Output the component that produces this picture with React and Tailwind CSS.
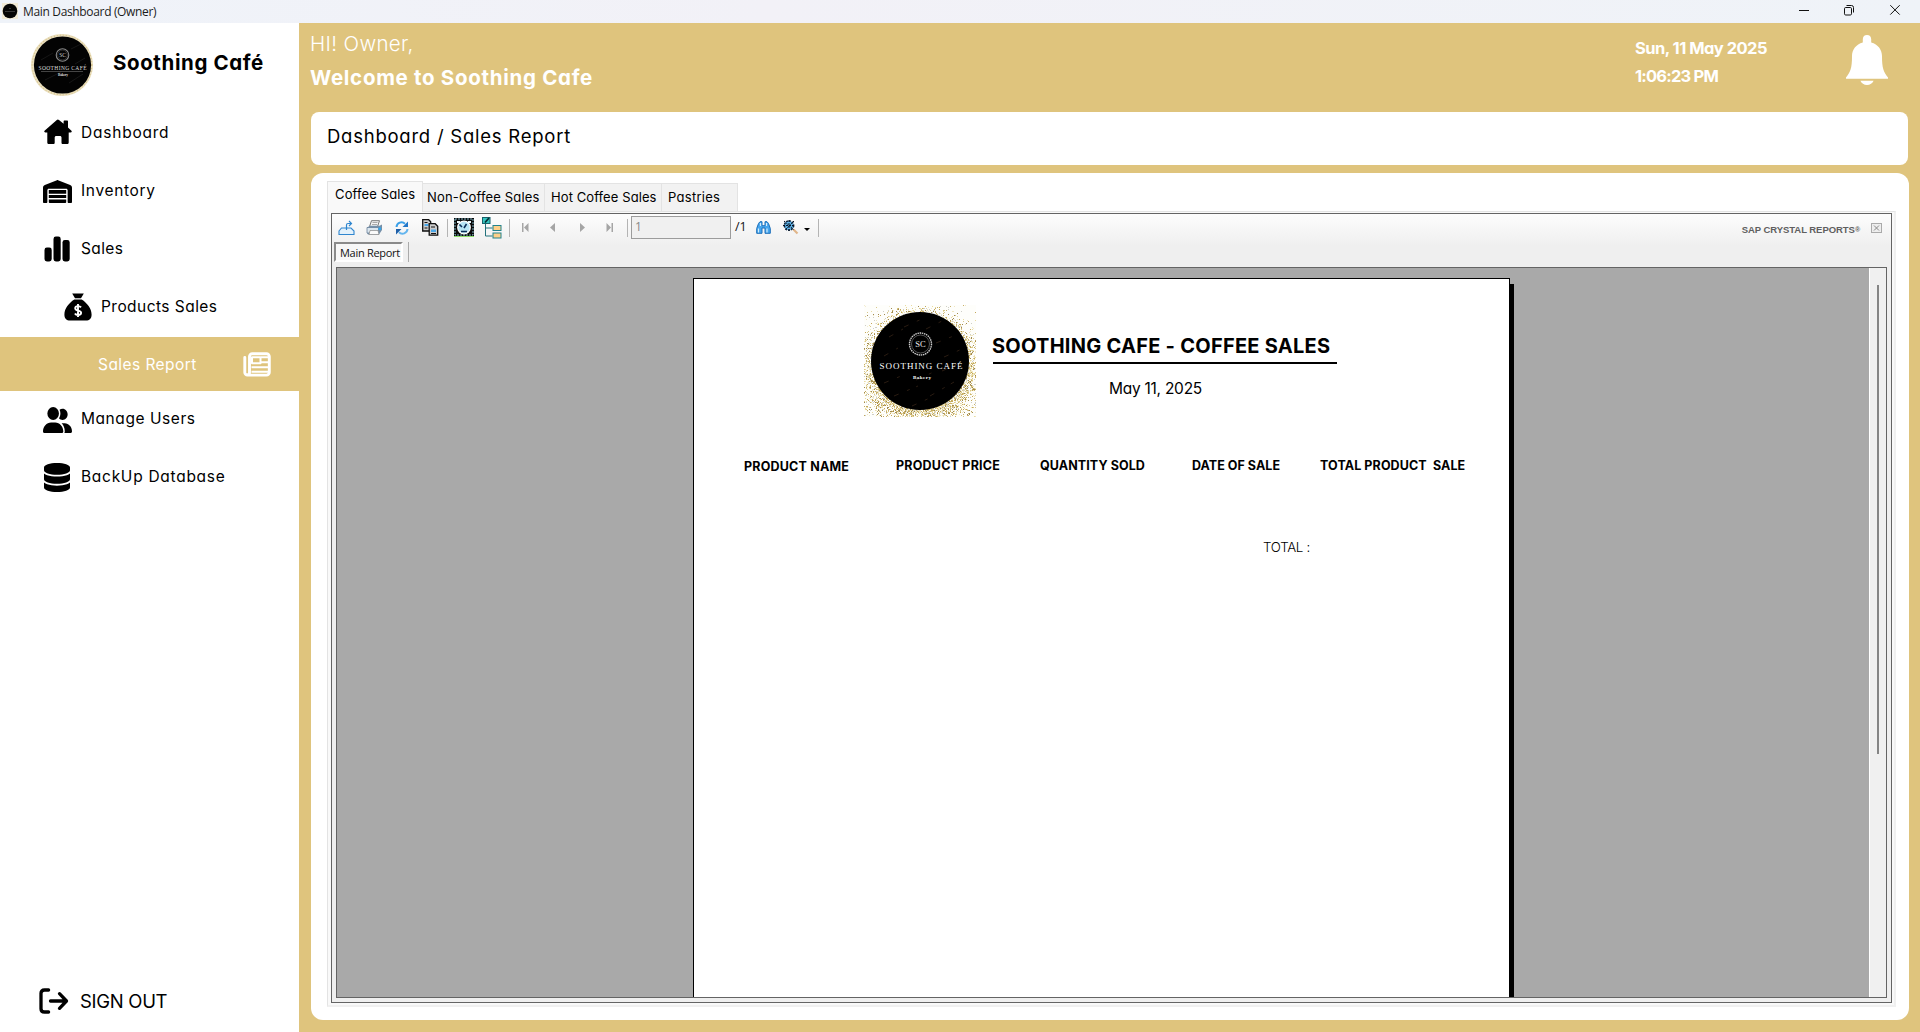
import { FaWarehouse, FaUserGroup, FaDatabase } from "react-icons/fa6";

const HouseIcon = () => (
  <svg width="28" height="26" viewBox="0 0 28 26">
    <path d="M12.8.9a1.7 1.7 0 0 1 2.2 0l4.6 3.9V2.6c0-.6.4-1 1-1H23c.6 0 1 .4 1 1v6l3.2 2.9c.9.8.7 2-.6 2h-1.900v9.900c0 1-.7 1.700-1.700 1.700h-4.200c-.8 0-1.300-.5-1.300-1.300v-5.200c0-1-.6-1.600-1.600-1.600h-3.600c-1 0-1.600.6-1.600 1.600v5.200c0 .8-.5 1.300-1.300 1.300H5c-1 0-1.700-.7-1.700-1.700v-9.900H1.400c-1.300 0-1.500-1.200-.6-2z" />
  </svg>
);

const BarsIcon = () => (
  <svg width="28" height="26" viewBox="0 0 28 26">
    <rect x="0.500" y="11.5" width="7.200" height="14" rx="2.4" />
    <rect x="9.500" y="0.5" width="7.200" height="25" rx="2.4" />
    <rect x="18.500" y="4" width="7.200" height="21.5" rx="2.4" />
  </svg>
);

const MoneyBagIcon = () => (
  <svg width="28" height="28" viewBox="0 0 28 28">
    <path d="M8.2.6h11.6l-2.8 4.600h-6z" />
    <path d="M10.3 6.600h7.400C23 10 27.600 15.500 27.600 21.500c0 4-2.200 6-5.600 6H6c-3.400 0-5.600-2-5.600-6C.4 15.500 5 10 10.300 6.600z" />
    <path d="M17 14.400c-.7-1-1.800-1.300-3-1.300-1.700 0-2.800.9-2.800 2.200 0 3.100 5.900 1.400 5.900 4.500 0 1.300-1.200 2.200-3 2.200-1.500 0-2.600-.5-3.200-1.500M14 11v13" fill="none" stroke="#fff" strokeWidth="1.9" />
  </svg>
);

const NewspaperIcon = () => (
  <svg width="28" height="25" viewBox="0 0 28 25" fill="none" stroke="#fff" strokeLinecap="round" strokeLinejoin="round">
    <path d="M1.800 5.500V20.500a2.600 2.600 0 0 0 2.600 2.600H23.500a2.800 2.800 0 0 0 2.800-2.800V4.500a2.800 2.800 0 0 0-2.800-2.800H9.300a2.800 2.800 0 0 0-2.800 2.800V20.500a2.500 2.500 0 0 1-2.400 2.500" strokeWidth="2.900" />
    <path d="M9 5.200h8.500v6H9zM18 5.200h7M18 10.200h7M8.500 15.200H25M8.500 19.800H25" strokeWidth="2" strokeLinecap="butt" />
  </svg>
);

const SignOutIcon = () => (
  <svg width="30" height="26" viewBox="0 0 30 26" fill="none" stroke="#000" strokeWidth="3.3" strokeLinecap="round" strokeLinejoin="round">
    <path d="M9.600 2H5.500C3 2 2 3.300 2 5.300v15.400C2 22.700 3 24 5.500 24h4.100M11.500 13H27M20.500 5.700 27.500 13l-7 7.300" />
  </svg>
);

const BellIcon = () => (
  <svg width="42" height="50" viewBox="0 0 42 50" fill="#fff">
    <path d="M16.800 4.200C16.800 1.600 18.500 0 21 0s4.200 1.600 4.200 4.200v3.200C32 9.200 36 14.500 36 21c0 12 1.600 16 6 21.500v1.300H0v-1.300C4.400 37 6 33 6 21c0-6.500 4-11.800 10.800-13.600z" />
    <path d="M14.400 45.800h13.200c-1 2.700-3.600 4.200-6.600 4.200s-5.600-1.500-6.600-4.200z" />
  </svg>
);

// Gold dust scattered round the disc, denser towards the bottom.
function makeDust() {
  let seed = 7;
  const rnd = () => {
    seed = (seed * 16807) % 2147483647;
    return seed / 2147483647;
  };
  const colors = ["#d9c88a", "#c9b06a", "#e9dba0", "#a08a50", "#efe6c0", "#c4a85a", "#cfcfc8", "#f3ecd0"];
  const dots = [];
  for (let y = 0; y < 112; y++) {
    for (let x = 0; x < 112; x++) {
      const r = Math.hypot(x - 56, y - 56);
      if (r < 47) continue;
      const low = y / 112;
      const p = (0.55 + low * 0.5) * Math.exp(-(r - 48) / (6 + low * 9));
      if (rnd() < p) dots.push([x, y, colors[Math.floor(rnd() * colors.length)]]);
    }
  }
  return dots;
}
const DUST = makeDust();

const ReportLogo = () => (
  <svg width="112" height="112" viewBox="0 0 112 112" className="bg-[#fefefb]">
    {DUST.map(([x, y, c]) => (
      <rect key={x + "-" + y} x={x} y={y} width="1" height="1" fill={c} />
    ))}
    <circle cx="56" cy="56" r="49" />
    <g stroke="#2a1c12" strokeWidth="1" strokeDasharray="5 9 3 7">
      <path d="M25 32l14-8M40 22l20-9M62 24l16-8M20 51l14-8M72 38l20-8M20 78l22-9M30 91l24-10M52 75l22-10M78 66l18-8M66 91l24-14M48 101l20-9M80 52l18-8" />
    </g>
    <circle cx="56.500" cy="39" r="11" fill="none" stroke="#ccc" strokeWidth="1.400" strokeDasharray="1.500 .7" />
    <circle cx="56.500" cy="39" r="9" fill="none" stroke="#777" strokeWidth=".7" />
    <text x="56.500" y="42" fontSize="8.500" fill="#eee" textAnchor="middle" fontFamily="Liberation Serif, serif">SC</text>
    <text x="15.500" y="64" fontSize="9" fill="#fff" textLength="83" fontFamily="Liberation Serif, serif">SOOTHING CAFÉ</text>
    <text x="49" y="74" fontSize="5" fontWeight="700" fill="#fff" textLength="18" fontFamily="Liberation Serif, serif">Bakery</text>
  </svg>
);

const SideLogo = () => (
  <svg width="62" height="62" viewBox="0 0 62 62">
    <circle cx="31" cy="31" r="31" fill="#eadfbd" />
    <circle cx="31" cy="31" r="29.800" fill="none" stroke="#d8c48e" strokeWidth="1.200" strokeDasharray="1 2" />
    <circle cx="31.500" cy="31" r="28.600" fill="#030303" />
    <g stroke="#161616"><path d="M10 26l12-7M14 46l16-8M38 49l14-9M40 15l10-5M12 36l8-4M44 30l10-6" /></g>
    <circle cx="31.500" cy="21" r="6.300" fill="none" stroke="#8a8a8a" strokeWidth="1.100" />
    <circle cx="31.500" cy="21" r="4.900" fill="none" stroke="#555" strokeWidth=".5" />
    <text x="31.500" y="23" fontSize="5.500" fill="#ccc" textAnchor="middle" fontFamily="Liberation Serif, serif">SC</text>
    <text x="7.500" y="35.600" fontSize="5.500" fill="#ddd" textLength="48" fontFamily="Liberation Serif, serif">SOOTHING CAFÉ</text>
    <path d="M10 37.500h42" stroke="#555" strokeWidth=".8" />
    <text x="27" y="42.300" fontSize="3.500" fontWeight="700" fill="#ddd" textLength="10" fontFamily="Liberation Serif, serif">Bakery</text>
  </svg>
);

function TitleBar() {
  return (
    <header className="flex h-[23px] items-center bg-[linear-gradient(90deg,#eff3f9,#f2f1f7_40%,#eff3f8)]">
      <svg width="16" height="16" viewBox="0 0 16 16" className="ml-[2px] mb-[1px]">
        <rect width="16" height="16" fill="#f1ead6" />
        <circle cx="8" cy="8" r="7.300" fill="#050505" />
        <path d="M3 8.500h10M7 5.500h2" stroke="#444" strokeWidth=".8" />
      </svg>
      <span className="ml-[5px] mt-px font-['Open_Sans',sans-serif] text-[12px] leading-none tracking-[-0.34px] text-[#1b1b1b]">Main Dashboard (Owner)</span>
      <svg width="102" height="12" viewBox="0 0 102 12" className="ml-auto mr-[19px] mb-[3px]" fill="none" stroke="#111" strokeWidth="1">
        <path d="M0 6.500h10M91.300 1.200l9.400 9.400M100.700 1.200l-9.400 9.400" />
        <rect x="45.500" y="3.500" width="7" height="7.500" rx="1.200" />
        <path d="M47.500 1.500h5a2 2 0 0 1 2 2v5" />
      </svg>
    </header>
  );
}

const navText = "text-[15.5px] leading-none text-black";

function Sidebar() {
  return (
    <aside className="flex w-[299px] shrink-0 flex-col bg-white">
      <div className="flex h-[80px] items-start pl-[31px] pt-[11px]">
        <SideLogo />
        <span className="ml-[20px] mt-[19px] text-[20.5px] font-bold leading-none tracking-[0.6px]">Soothing Café</span>
      </div>
      <div className="flex h-[58px] items-center pl-[44px]">
        <div className="w-[37px]"><HouseIcon /></div>
        <span className={navText + " translate-y-px tracking-[0.78px]"}>Dashboard</span>
      </div>
      <div className="flex h-[58px] items-center pl-[43px]">
        <div className="w-[38px]"><FaWarehouse className="h-[23px] w-[29px] translate-y-px" preserveAspectRatio="none" /></div>
        <span className={navText + " translate-y-px tracking-[0.66px]"}>Inventory</span>
      </div>
      <div className="flex h-[59px] items-center pl-[44px]">
        <div className="w-[37px]"><BarsIcon /></div>
        <span className={navText + " tracking-[0.35px]"}>Sales</span>
      </div>
      <div className="flex h-[59px] items-center pl-[64px]">
        <div className="w-[37px] -translate-y-px"><MoneyBagIcon /></div>
        <span className={navText + " -translate-y-px tracking-[0.45px]"}>Products Sales</span>
      </div>
      <div className="flex h-[54px] items-center bg-[#dfc47d] pl-[98px]">
        <span className="translate-y-px text-[15.5px] leading-none tracking-[0.44px] text-white">Sales Report</span>
        <div className="ml-auto mr-[28px]"><NewspaperIcon /></div>
      </div>
      <div className="flex h-[57px] items-center pl-[43px]">
        <div className="w-[38px]"><FaUserGroup className="h-[26px] w-[29px]" preserveAspectRatio="none" /></div>
        <span className={navText + " -translate-y-px tracking-[0.56px]"}>Manage Users</span>
      </div>
      <div className="flex h-[58px] items-center pl-[44px]">
        <div className="w-[37px]"><FaDatabase className="h-[29px] w-[26px]" preserveAspectRatio="none" /></div>
        <span className={navText + " tracking-[0.72px]"}>BackUp Database</span>
      </div>
      <div className="mt-auto mb-[18px] flex h-[26px] items-center pl-[39px]">
        <SignOutIcon />
        <span className="ml-[11px] text-[18.5px] leading-none tracking-[-0.3px]">SIGN OUT</span>
      </div>
    </aside>
  );
}

const Divider = ({ className }) => <div className={"h-[18px] w-px bg-[#b4b4b4] " + className} />;

function Toolbar() {
  return (
    <div className="flex h-[27px] items-center">
      <svg width="17" height="16" viewBox="0 0 17 16" className="ml-[6px]" fill="none" stroke="#2f86cf">
        <path d="M1 11 3.500 8h9.500l3 3v3.500H1z" strokeWidth="1.100" fill="#e3f1fb" />
        <path d="M8.500 10V5c0-1 .5-1.500 1.500-1.500h3M11 1l2.500 2.500L11 6" strokeWidth="1.200" />
      </svg>
      <svg width="17" height="16" viewBox="0 0 17 16" className="ml-[11px]">
        <path d="M5.500.7h8l-2 6h-8z" fill="#f4f4f4" stroke="#777" />
        <path d="M6.500 2.500h5M6 4.500h5" stroke="#aaa" />
        <path d="M1 7.500 4 5.800h9.500L16 4.500V10l-3 4.500H2L1 13z" fill="#7590a9" />
        <path d="M1 7.500h11.500V13H1z" fill="#dbe6ef" stroke="#69819a" strokeWidth=".8" />
        <path d="M4 10.500h8l1 4H3z" fill="#fafafa" stroke="#888" strokeWidth=".7" />
        <rect x="12.500" y="7.500" width="2.500" height="2.500" fill="#2fa8f0" />
      </svg>
      <svg width="14" height="14" viewBox="0 0 14 14" className="ml-[12px]" fill="none" strokeWidth="2">
        <path d="M1.500 6A5 5 0 0 1 10 2.800" stroke="#3aa0e8" /><path d="M13 .5v5.500H7.500z" fill="#2277c8" />
        <path d="M12.500 8A5 5 0 0 1 4 11.200" stroke="#63b5ee" /><path d="M1 13.500V8h5.500z" fill="#1e5fa8" />
      </svg>
      <svg width="17" height="17" viewBox="0 0 17 17" className="ml-[13px]" stroke="#111">
        <path d="M.7.700h6l2 2V12h-8z" fill="#ccc" strokeWidth="1.300" /><path d="M2.500 3.500h3M2.500 9h3" />
        <rect x="2.500" y="5" width="4" height="2" fill="#4aa7e8" stroke="none" />
        <path d="M7.200 4.700h6l2.500 2.500v9h-8.500z" fill="#ccc" strokeWidth="1.300" /><path d="M9 8h4M9 14.500h5" />
        <path d="M9 10.500h5v2.500H9z" fill="#4aa7e8" stroke="none" />
      </svg>
      <Divider className="ml-[8px]" />
      <svg width="20" height="19" viewBox="0 0 20 19" className="ml-[6px]">
        <rect width="20" height="18" fill="#0a0a0a" />
        <rect x="1" y="1" width="18" height="16" fill="none" stroke="#9adcf0" strokeWidth=".8" strokeDasharray="2 1" />
        <rect y="18" width="20" height="1" fill="#8de06a" />
        <path d="M3 3h3v2H3zM14 3h3v2h-3z" fill="#eaf8fc" />
        <circle cx="10" cy="9.500" r="6.300" fill="#b8e4f4" stroke="#fff" strokeWidth="1.200" />
        <path d="M5.500 6.500 8 9M12.500 6l-2.500 4M7 13.500h6" fill="none" stroke="#0b2c56" strokeWidth="1.600" />
      </svg>
      <svg width="20" height="22" viewBox="0 0 20 22" className="ml-[8px]">
        <path d="M3.500 6v13h7M3.500 11h7" fill="none" stroke="#23727c" />
        <rect x=".5" y=".5" width="7.500" height="6" fill="#37c5c0" stroke="#16616a" />
        <path d="M3 5.500 7 1" stroke="#032c33" strokeWidth="1.700" />
        <rect x="11" y="8.500" width="8" height="5" fill="#ffd08a" stroke="#23838c" />
        <rect x="11" y="16" width="8" height="5" fill="#ffd08a" stroke="#23838c" />
      </svg>
      <Divider className="ml-[7px]" />
      <svg width="7" height="9" viewBox="0 0 7 9" className="ml-[12px]" fill="#a5a5a5"><path d="M0 0h1.500v9H0zM6.500 0v9L2 4.500z" /></svg>
      <svg width="5" height="9" viewBox="0 0 5 9" className="ml-[21px]" fill="#a5a5a5"><path d="M5 0v9L0 4.500z" /></svg>
      <svg width="5" height="9" viewBox="0 0 5 9" className="ml-[25px]" fill="#a5a5a5"><path d="M0 0v9l5-4.500z" /></svg>
      <svg width="7" height="9" viewBox="0 0 7 9" className="ml-[21px]" fill="#a5a5a5"><path d="M5.500 0H7v9H5.500zM.5 0v9L5 4.500z" /></svg>
      <Divider className="ml-[14px]" />
      <div className="ml-[3px] h-[23px] w-[100px] border border-[#9c9c9c] bg-[#f0f0f0] pl-[3px] pt-[4px] font-['Open_Sans',sans-serif] text-[12px] leading-none text-[#888]">1</div>
      <span className="ml-[4px] w-[11px] font-['Open_Sans',sans-serif] text-[12.5px] leading-none text-[#111]">/1</span>
      <svg width="15" height="13" viewBox="0 0 15 13" className="ml-[10px]">
        <path d="M2.500 2.500 4 .7h2v4h3v-4h2l1.500 1.800 1.800 5v4.800H9V7H6v5.300H.7V7.500z" fill="#45a5ee" stroke="#1c6fb9" />
        <path d="M2.500 7.500v4M11 7.500v4M4.500 2v3M10.500 2v3" stroke="#d4edfc" strokeWidth="1.200" />
      </svg>
      <svg width="16" height="15" viewBox="0 0 16 15" className="ml-[12px]">
        <circle cx="6" cy="5.500" r="4.600" fill="#5cb3ea" stroke="#0d2741" strokeWidth="1.600" strokeDasharray="2 1" />
        <path d="M1 1l10 9M11 1 2 10M6 0v11M0 5.500h11.500" stroke="#0a1320" strokeDasharray="2 1" />
        <path d="m10.500 9.500 4 4" stroke="#e0b58a" strokeWidth="2.200" />
      </svg>
      <svg width="6" height="3" viewBox="0 0 6 3" className="ml-[5px] mt-[3px]"><path d="M0 0h6L3 3z" /></svg>
      <Divider className="ml-[8px]" />
      <span className="ml-auto mt-[5px] font-['Liberation_Sans',sans-serif] text-[9.5px] font-bold leading-none tracking-[-0.05px] text-[#5f5f5f]">SAP CRYSTAL REPORTS<span className="text-[7px] align-[1px]">®</span></span>
      <svg width="11" height="10" viewBox="0 0 11 10" className="ml-[11px] mr-[9px] mt-px" fill="none" stroke="#aaa">
        <rect x=".5" y=".5" width="10" height="9" fill="#eee" /><path d="m3 2.500 5 5M8 2.500l-5 5" stroke="#888" />
      </svg>
    </div>
  );
}

const COLUMNS = [
  ["PRODUCT NAME", "w-[152px] tracking-[0.19px] translate-y-px"],
  ["PRODUCT PRICE", "w-[144px] tracking-[0.21px]"],
  ["QUANTITY SOLD", "w-[152px] tracking-[0.09px]"],
  ["DATE OF SALE", "w-[128px] tracking-[0.04px]"],
  ["TOTAL PRODUCT  SALE", "tracking-[0.1px]"],
];

function ReportPage() {
  return (
    <div className="ml-[356px] mt-[10px] h-[900px] w-[817px] border border-black bg-white shadow-[4px_6px_0_#000]">
      <div className="flex pl-[170px] pt-[26px]">
        <ReportLogo />
        <div className="ml-[17px] w-[344px] pt-[30px]">
          <h1 className="border-b-2 border-black pb-[5px] text-[20px] font-bold leading-[22px] tracking-[0.26px]"><span className="-ml-px">SOOTHING CAFE - COFFEE SALES</span></h1>
          <p className="ml-[116px] mt-[17px] text-[15.5px] leading-none tracking-[-0.26px]">May 11, 2025</p>
        </div>
      </div>
      <div className="mt-[42px] flex whitespace-pre pl-[50px] text-[12.5px] font-bold leading-[14px]">
        {COLUMNS.map(([label, cls]) => (
          <span key={label} className={cls}>{label}</span>
        ))}
      </div>
      <p className="ml-[569px] mt-[67px] text-[13.3px] font-light leading-[14px] tracking-[-0.28px]">TOTAL :</p>
    </div>
  );
}

const tabBase = "h-[28px] border border-b-0 border-[#e3e3e3] bg-[#f2f2f2] text-[13px] leading-[26px]";

function ReportPanel() {
  return (
    <section className="h-[847px] w-[1598px] rounded-xl bg-white pl-[16px] pt-[8px]">
      <div className="flex h-[30px] items-end">
        <div className="z-10 -mb-px h-[31px] w-[96px] border border-b-0 border-[#e3e3e3] bg-[#f9f9f9] pl-[7px] text-[13px] leading-[25px] tracking-[0.13px]">Coffee Sales</div>
        <div className={tabBase + " w-[122px] border-l-0 pl-[4px] tracking-[0.16px]"}>Non-Coffee Sales</div>
        <div className={tabBase + " w-[117px] border-l-0 pl-[6px] tracking-[0.09px]"}>Hot Coffee Sales</div>
        <div className={tabBase + " w-[76px] border-l-0 pl-[6px] tracking-[0.28px]"}>Pastries</div>
      </div>
      <div className="h-[796px] w-[1569px] border border-[#e3e3e3] border-r-2 border-b-2 border-r-[#f0f0f0] border-b-[#f0f0f0] bg-[#f9f9f9] pl-[3px] pt-px">
        <div className="h-[790px] w-[1561px] border border-[#646464] bg-[#f0f0f0] bg-[linear-gradient(#fdfdfd,#efefef_32px)]">
          <Toolbar />
          <div className="flex h-[26px] items-start pl-[2px] pt-px">
            <div className="h-[20px] w-[69px] whitespace-nowrap border-2 border-b-white border-l-[#8a8a8a] border-r-white border-t-[#8a8a8a] bg-[#f7f7f7] pl-[4px] font-['Open_Sans',sans-serif] text-[11px] leading-[17px] tracking-[-0.3px] text-[#111]">Main Report</div>
            <div className="ml-[5px] h-[20px] w-px bg-[#aaa]" />
          </div>
          <div className="ml-[4px] flex h-[731px] w-[1551px] overflow-hidden border border-[#646464] bg-[#a9a9a9]">
            <div className="w-[1532px] shrink-0 overflow-hidden"><div className="flow-root h-full"><ReportPage /></div></div>
            <div className="w-[17px] border-l border-white bg-[#f0f0f0] pl-[7px] pt-[17px]">
              <div className="h-[469px] w-[2px] bg-[#858585]" />
            </div>
          </div>
        </div>
      </div>
    </section>
  );
}

export default function App() {
  return (
    <div className="h-[1032px] w-[1920px] overflow-hidden bg-[#dfc47d] font-['Inter',sans-serif] text-black [font-feature-settings:'cv11']">
      <TitleBar />
      <div className="flex h-[1009px]">
        <Sidebar />
        <main className="flex-1 pl-[12px]">
          <div className="flex h-[89px] items-start text-white">
            <div className="-ml-px pt-[4px]">
              <p className="text-[20.5px] font-[350] leading-[34px] tracking-[0.35px]">HI! Owner,</p>
              <p className="text-[20.5px] font-bold leading-[34px] tracking-[0.7px]">Welcome to Soothing Cafe</p>
            </div>
            <div className="ml-auto w-[211px] pt-[11px] text-[16.5px] font-bold leading-[28px]">
              <p className="tracking-[-0.53px]">Sun, 11 May 2025</p>
              <p className="tracking-[-0.8px]">1:06:23 PM</p>
            </div>
            <div className="mr-[32px] pt-[12px]"><BellIcon /></div>
          </div>
          <div className="mb-[8px] h-[53px] w-[1597px] rounded-lg bg-white pl-[16px] text-[18.5px] leading-[49px] tracking-[0.76px]">Dashboard / Sales Report</div>
          <ReportPanel />
        </main>
      </div>
    </div>
  );
}
